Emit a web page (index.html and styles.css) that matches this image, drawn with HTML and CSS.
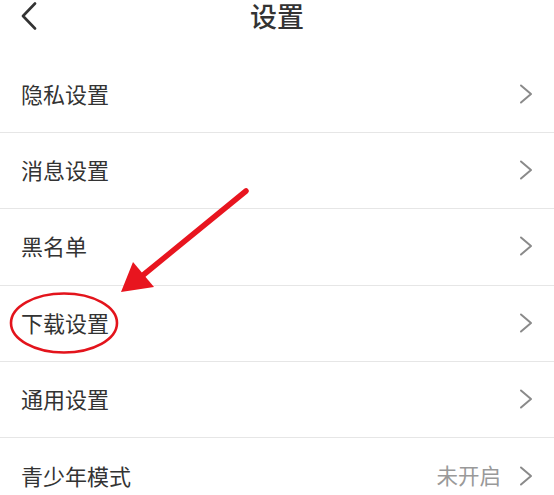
FILE: index.html
```html
<!DOCTYPE html>
<html lang="zh-CN">
<head>
<meta charset="utf-8">
<title>设置</title>
<link rel="stylesheet" href="styles.css">
</head>
<body>
<div class="page">
  <header class="header">
    <div class="back">
      <svg width="18" height="28" viewBox="0 0 18 28"><path d="M15 1.5 L3 14 L15 26.5" fill="none" stroke="#333" stroke-width="2.6" stroke-linecap="round" stroke-linejoin="round"/></svg>
    </div>
    <h1 class="title">设置</h1>
    <div class="spacer"></div>
  </header>
  <ul class="list">
    <li class="row"><span class="label">隐私设置</span><span class="right"><svg class="chev" width="14" height="20" viewBox="0 0 14 20"><path d="M2 1.5 L12 10 L2 18.5" fill="none" stroke="#8a8a8a" stroke-width="2" stroke-linecap="round" stroke-linejoin="round"/></svg></span></li>
    <li class="row"><span class="label">消息设置</span><span class="right"><svg class="chev" width="14" height="20" viewBox="0 0 14 20"><path d="M2 1.5 L12 10 L2 18.5" fill="none" stroke="#8a8a8a" stroke-width="2" stroke-linecap="round" stroke-linejoin="round"/></svg></span></li>
    <li class="row"><span class="label">黑名单</span><span class="right"><svg class="chev" width="14" height="20" viewBox="0 0 14 20"><path d="M2 1.5 L12 10 L2 18.5" fill="none" stroke="#8a8a8a" stroke-width="2" stroke-linecap="round" stroke-linejoin="round"/></svg></span></li>
    <li class="row"><span class="label">下载设置</span><span class="right"><svg class="chev" width="14" height="20" viewBox="0 0 14 20"><path d="M2 1.5 L12 10 L2 18.5" fill="none" stroke="#8a8a8a" stroke-width="2" stroke-linecap="round" stroke-linejoin="round"/></svg></span></li>
    <li class="row"><span class="label">通用设置</span><span class="right"><svg class="chev" width="14" height="20" viewBox="0 0 14 20"><path d="M2 1.5 L12 10 L2 18.5" fill="none" stroke="#8a8a8a" stroke-width="2" stroke-linecap="round" stroke-linejoin="round"/></svg></span></li>
    <li class="row"><span class="label">青少年模式</span><span class="right"><span class="value">未开启</span><svg class="chev" width="14" height="20" viewBox="0 0 14 20"><path d="M2 1.5 L12 10 L2 18.5" fill="none" stroke="#8a8a8a" stroke-width="2" stroke-linecap="round" stroke-linejoin="round"/></svg></span></li>
  </ul>
  <svg class="overlay" width="554" height="495" viewBox="0 0 554 495">
    <line x1="246" y1="191" x2="142" y2="276" stroke="#e8151f" stroke-width="5.5" stroke-linecap="round"/>
    <polygon points="121,292 133,262 154,287" fill="#e8151f"/>
    <ellipse cx="64" cy="323" rx="53" ry="29.5" fill="none" stroke="#e3141c" stroke-width="2.6"/>
  </svg>
</div>
</body>
</html>
```

FILE: styles.css
```css
* { box-sizing: border-box; }
html, body { margin: 0; padding: 0; background: #fff; }
body {
  font-family: "Noto Sans CJK SC", "Noto Sans", sans-serif;
  color: #333;
  width: 554px;
  height: 495px;
  overflow: hidden;
}
.page { position: relative; width: 554px; height: 495px; }
.header {
  height: 56.75px;
  display: grid;
  grid-template-columns: 1fr auto 1fr;
  align-items: start;
}
.back { padding-left: 20px; padding-top: 2px; line-height: 0; }
.title {
  margin: 0;
  font-size: 27px;
  font-weight: 500;
  line-height: 31px;
  color: #333;
}
.list { list-style: none; margin: 0; padding: 0; }
.row {
  height: 76.25px;
  border-bottom: 1px solid #e6e6e6;
  display: flex;
  align-items: center;
  justify-content: space-between;
  padding: 0 21px 3px 21px;
}
.row:last-child { border-bottom: none; }
.label { font-size: 22px; color: #333; line-height: 30px; }
.right { display: flex; align-items: center; gap: 18px; padding-top: 2px; }
.value { font-size: 21.5px; color: #999; line-height: 30px; margin-top: -2px; }
.chev { display: block; }
.overlay { position: absolute; left: 0; top: 0; pointer-events: none; }
```
